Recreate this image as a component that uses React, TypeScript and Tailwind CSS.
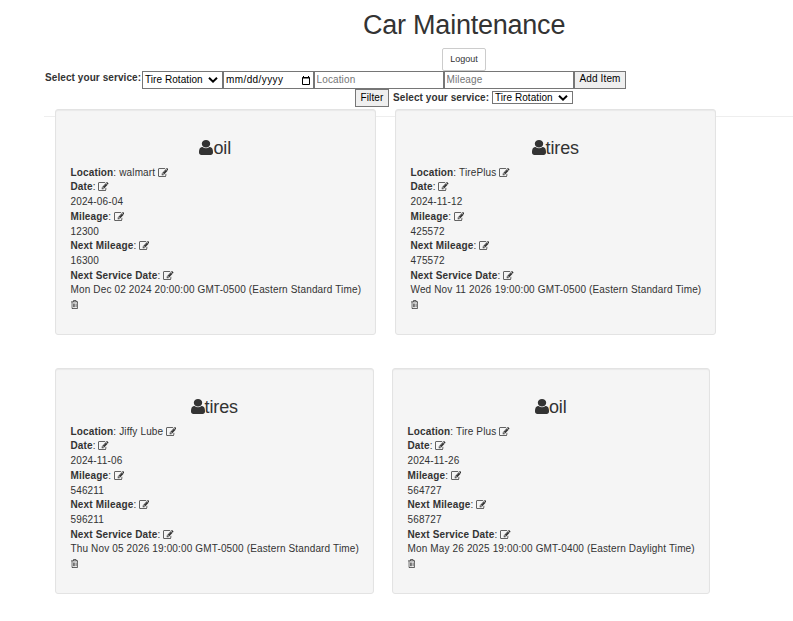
import type { ReactNode } from "react";

type IconProps = { className: string };

function UserIcon({ className }: IconProps) {
  return (
    <svg viewBox="256 128 1280 1536" preserveAspectRatio="none" fill="currentColor" className={className}>
      <path d="M1536 1399q0 109-62.5 187t-150.5 78h-854q-88 0-150.5-78t-62.5-187q0-85 8.5-160.5t31.5-152 58.5-131 94-89 134.5-34.5q131 128 313 128t313-128q76 0 134.5 34.5t94 89 58.5 131 31.5 152 8.5 160.5zm-256-887q0 159-112.5 271.5t-271.5 112.5-271.5-112.5-112.5-271.5 112.5-271.5 271.5-112.5 271.5 112.5 112.5 271.5z" />
    </svg>
  );
}

function EditIcon({ className }: IconProps) {
  return (
    <svg viewBox="0 128 1792 1408" preserveAspectRatio="none" fill="currentColor" className={className}>
      <path d="M888 1184l116-116-152-152-116 116v56h96v96h56zm440-720q-16-16-33 1l-350 350q-17 17-1 33t33-1l350-350q17-17 1-33zm80 594v190q0 119-84.5 203.5t-203.5 84.5h-832q-119 0-203.5-84.5t-84.5-203.5v-832q0-119 84.5-203.5t203.5-84.5h832q63 0 117 25 15 7 18 23 3 17-9 29l-49 49q-14 14-32 8-23-6-45-6h-832q-66 0-113 47t-47 113v832q0 66 47 113t113 47h832q66 0 113-47t47-113v-126q0-13 9-22l64-64q15-15 35-7t20 29zm-96-738l288 288-672 672h-288v-288zm444 132l-92 92-288-288 92-92q28-28 68-28t68 28l152 152q28 28 28 68t-28 68z" />
    </svg>
  );
}

function TrashIcon({ className }: IconProps) {
  return (
    <svg viewBox="192 128 1408 1536" preserveAspectRatio="none" fill="currentColor" className={className}>
      <path d="M704 736v576q0 14-9 23t-23 9h-64q-14 0-23-9t-9-23v-576q0-14 9-23t23-9h64q14 0 23 9t9 23zm256 0v576q0 14-9 23t-23 9h-64q-14 0-23-9t-9-23v-576q0-14 9-23t23-9h64q14 0 23 9t9 23zm256 0v576q0 14-9 23t-23 9h-64q-14 0-23-9t-9-23v-576q0-14 9-23t23-9h64q14 0 23 9t9 23zm128 724v-948h-896v948q0 22 7 40.5t14.5 27 10.5 8.5h832q3 0 10.5-8.5t14.5-27 7-40.5zm-672-1076h448l-48-117q-7-9-17-11h-317q-10 2-17 11zm928 32v64q0 14-9 23t-23 9h-96v948q0 83-47 143.5t-113 60.5h-832q-66 0-113-58.5t-47-141.5v-952h-96q-14 0-23-9t-9-23v-64q0-14 9-23t23-9h309l70-167q15-37 54-63t79-26h320q40 0 79 26t54 63l70 167h309q14 0 23 9t9 23z" />
    </svg>
  );
}

function ServicePicker({ className }: IconProps) {
  return (
    <button
      type="button"
      className={`flex w-[81px] items-center justify-between border border-[#767676] bg-white pr-1 pl-[2px] text-[10px] leading-none tracking-[0.06px] text-black ${className}`}
    >
      <span className="whitespace-nowrap">Tire Rotation</span>
      <svg viewBox="0 0 10 6" fill="none" stroke="currentColor" strokeWidth="2" className="h-[6px] w-[10px] shrink-0">
        <path d="M1 0.8 5 4.6 9 0.8" />
      </svg>
    </button>
  );
}

type Service = {
  kind: string;
  place: string;
  date: string;
  mileage: string;
  nextMileage: string;
  nextDate: string;
};

function Field({ label, children }: { label: string; children?: ReactNode }) {
  return (
    <p className="flex items-center whitespace-pre">
      <b>{label}</b>
      <span>: {children}</span>
      <EditIcon className="-mt-[1.5px] -ml-[0.3px] h-[9px] w-[10.5px] shrink-0" />
    </p>
  );
}

function Card({ item, className }: { item: Service; className: string }) {
  return (
    <article
      className={`h-[226px] shrink-0 rounded-[3px] border border-[#e3e3e3] bg-[#f5f5f5] pt-[27px] pl-[14.5px] shadow-[inset_0_1px_1px_rgba(0,0,0,0.05)] ${className}`}
    >
      <h3 className="mr-[15px] mb-[6.7px] flex h-[22px] items-center justify-center text-[18px] leading-[22px] tracking-[-0.15px]">
        <UserIcon className="mb-px h-[15px] w-[14px]" />
        {item.kind}
      </h3>
      <div className="text-[10px] leading-[14.7px] tracking-[0.145px]">
        <Field label="Location">{item.place + " "}</Field>
        <Field label="Date" />
        <p>{item.date}</p>
        <Field label="Mileage" />
        <p>{item.mileage}</p>
        <Field label="Next Mileage" />
        <p>{item.nextMileage}</p>
        <Field label="Next Service Date" />
        <p className="whitespace-nowrap">{item.nextDate}</p>
        <div className="flex h-[13px] items-center">
          <TrashIcon className="h-[9px] w-[7.5px]" />
        </div>
      </div>
    </article>
  );
}

const services: Service[] = [
  { kind: "oil", place: "walmart", date: "2024-06-04", mileage: "12300", nextMileage: "16300", nextDate: "Mon Dec 02 2024 20:00:00 GMT-0500 (Eastern Standard Time)" },
  { kind: "tires", place: "TirePlus", date: "2024-11-12", mileage: "425572", nextMileage: "475572", nextDate: "Wed Nov 11 2026 19:00:00 GMT-0500 (Eastern Standard Time)" },
  { kind: "tires", place: "Jiffy Lube", date: "2024-11-06", mileage: "546211", nextMileage: "596211", nextDate: "Thu Nov 05 2026 19:00:00 GMT-0500 (Eastern Standard Time)" },
  { kind: "oil", place: "Tire Plus", date: "2024-11-26", mileage: "564727", nextMileage: "568727", nextDate: "Mon May 26 2025 19:00:00 GMT-0400 (Eastern Daylight Time)" },
];

export default function App() {
  return (
    <main className="h-[621px] w-[793px] overflow-hidden bg-white font-['Liberation_Sans',Arial,sans-serif] text-[#333]">
      <h1 className="h-12 pt-px pl-[363px] text-[27px] leading-[48px] tracking-[-0.23px] whitespace-nowrap">Car Maintenance</h1>
      <button type="button" className="ml-[442px] flex h-[23px] w-11 items-center justify-center rounded-[2px] border border-[#ccc] text-[9px]">
        Logout
      </button>
      <form className="flex h-[18px] pl-[45px] text-[10px] leading-none">
        <label className="w-[97px] pt-[2px] font-bold tracking-[0.08px] whitespace-nowrap">Select your service:</label>
        <ServicePicker className="h-[18px]" />
        <div className="flex w-[91px] items-center justify-between border border-[#767676] pr-[3px] pl-[2px] text-black">
          <span className="tracking-[0.4px]">mm/dd/yyyy</span>
          <svg viewBox="0 0 8 9" fill="none" stroke="currentColor" className="h-[9px] w-2">
            <path d="M0.5 1.5h7v7h-7zM0.5 2h7M1.5 0v1.5M6.5 0v1.5" />
          </svg>
        </div>
        <input placeholder="Location" className="w-[130px] border border-[#767676] px-[1.5px] pb-[2px] tracking-[0.13px] placeholder:text-[#757575]" />
        <input placeholder="Mileage" className="w-[130px] border border-[#767676] px-[1.5px] pb-[2px] tracking-[0.13px] placeholder:text-[#757575]" />
        <button type="button" className="w-[52px] border border-[#767676] bg-[#efefef] pb-[2px] tracking-[0.15px] whitespace-nowrap text-black">
          Add Item
        </button>
      </form>
      <div className="flex h-[18px] pl-[355px] text-[10px] leading-none">
        <button type="button" className="mr-1 w-[34px] border border-[#767676] bg-[#efefef] tracking-[0.15px] text-black">
          Filter
        </button>
        <label className="w-[99px] pt-1 font-bold tracking-[0.08px] whitespace-nowrap">Select your service:</label>
        <ServicePicker className="mt-[2px] h-[13px]" />
      </div>
      <hr className="mt-[9px] ml-[44px] border-[#eee]" />
      <section className="relative -mt-2 pl-[55px]">
        <div className="flex gap-[19px]">
          <Card item={services[0]} className="w-[321px]" />
          <Card item={services[1]} className="w-[321px]" />
        </div>
        <div className="mt-[33px] flex gap-[18px]">
          <Card item={services[2]} className="w-[319px]" />
          <Card item={services[3]} className="w-[318px]" />
        </div>
      </section>
    </main>
  );
}
